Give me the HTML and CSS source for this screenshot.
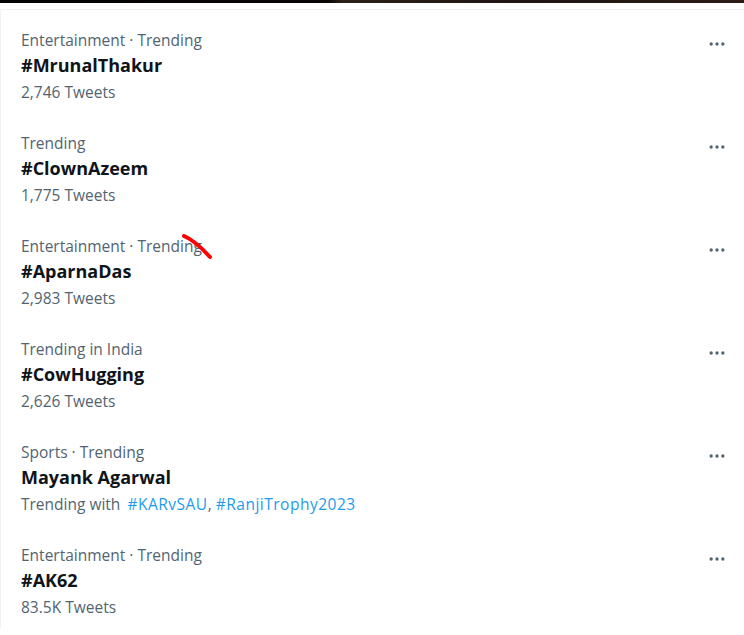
FILE: index.html
```html
<!DOCTYPE html>
<html lang="en">
<head>
    <meta charset="UTF-8">
    <meta name="viewport" content="width=device-width, initial-scale=1.0">
    <title>Trends</title>
    <link rel="stylesheet" href="styles.css">
</head>
<body>

<div class="banner"></div>

<div class="trends">
    <div class="trend">
        <div class="trend-info">
            <div class="meta">Entertainment · Trending</div>
            <div class="name">#MrunalThakur</div>
            <div class="count">2,746 Tweets</div>
        </div>
        <button class="more"><svg viewBox="0 0 24 24"><circle cx="5" cy="12" r="2"/><circle cx="12" cy="12" r="2"/><circle cx="19" cy="12" r="2"/></svg></button>
    </div>

    <div class="trend">
        <div class="trend-info">
            <div class="meta">Trending</div>
            <div class="name">#ClownAzeem</div>
            <div class="count">1,775 Tweets</div>
        </div>
        <button class="more"><svg viewBox="0 0 24 24"><circle cx="5" cy="12" r="2"/><circle cx="12" cy="12" r="2"/><circle cx="19" cy="12" r="2"/></svg></button>
    </div>

    <div class="trend">
        <div class="trend-info">
            <div class="meta">Entertainment · Trending</div>
            <div class="name">#AparnaDas</div>
            <div class="count">2,983 Tweets</div>
        </div>
        <button class="more"><svg viewBox="0 0 24 24"><circle cx="5" cy="12" r="2"/><circle cx="12" cy="12" r="2"/><circle cx="19" cy="12" r="2"/></svg></button>
        <svg class="scribble" viewBox="0 0 32 26"><path d="M3 2 C 10 5, 19 12, 29 23"/></svg>
    </div>

    <div class="trend">
        <div class="trend-info">
            <div class="meta">Trending in India</div>
            <div class="name">#CowHugging</div>
            <div class="count">2,626 Tweets</div>
        </div>
        <button class="more"><svg viewBox="0 0 24 24"><circle cx="5" cy="12" r="2"/><circle cx="12" cy="12" r="2"/><circle cx="19" cy="12" r="2"/></svg></button>
    </div>

    <div class="trend">
        <div class="trend-info">
            <div class="meta">Sports · Trending</div>
            <div class="name">Mayank Agarwal</div>
            <div class="count">Trending with <a href="#" class="tag">#KARvSAU</a>, <a href="#">#RanjiTrophy2023</a></div>
        </div>
        <button class="more"><svg viewBox="0 0 24 24"><circle cx="5" cy="12" r="2"/><circle cx="12" cy="12" r="2"/><circle cx="19" cy="12" r="2"/></svg></button>
    </div>

    <div class="trend">
        <div class="trend-info">
            <div class="meta">Entertainment · Trending</div>
            <div class="name">#AK62</div>
            <div class="count">83.5K Tweets</div>
        </div>
        <button class="more"><svg viewBox="0 0 24 24"><circle cx="5" cy="12" r="2"/><circle cx="12" cy="12" r="2"/><circle cx="19" cy="12" r="2"/></svg></button>
    </div>
</div>

</body>
</html>
```

FILE: styles.css
```css
body {
    font-family: "Open Sans", "Liberation Sans", Arial, sans-serif;
    background-color: white;
    margin: 0;
    color: #0f1419;
}
.banner {
    height: 3px;
    background: linear-gradient(to right, #050303 0%, #0a0605 44%, #2b2118 46%, #1e1512 70%, #2a1c14 100%);
}
.trends {
    margin-top: 6px;
    border-top: 1px solid #eff3f4;
    border-left: 1px solid #eff3f4;
}
.trend {
    position: relative;
    display: flex;
    justify-content: space-between;
    padding: 20px 17px 11px 20px;
}
.meta, .count {
    font-size: 15.5px;
    line-height: 20px;
    color: #536471;
}
.name {
    font-size: 18px;
    line-height: 25px;
    font-weight: 700;
    margin-top: 3px;
}
.count {
    margin-top: 4px;
}
.count a {
    color: #1d9bf0;
    text-decoration: none;
    letter-spacing: 0.5px;
}
.count a.tag {
    margin-left: 3px;
}
.more {
    align-self: flex-start;
    margin-top: 4px;
    padding: 0;
    border: none;
    background: none;
    width: 20px;
    height: 20px;
}
.more svg {
    width: 20px;
    height: 20px;
    fill: #536471;
    display: block;
}
.scribble {
    position: absolute;
    left: 180px;
    top: 18px;
    width: 32px;
    height: 26px;
    fill: none;
    stroke: #f00;
    stroke-width: 4;
    stroke-linecap: round;
}
```
